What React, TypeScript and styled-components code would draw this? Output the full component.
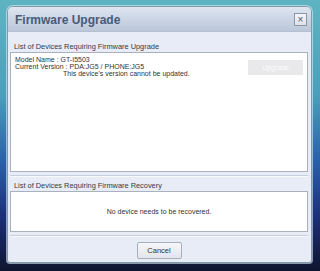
import React from "react";
import styled, { createGlobalStyle } from "styled-components";

const Global = createGlobalStyle`
  html, body { margin: 0; padding: 0; }
  body {
    width: 320px;
    height: 271px;
    overflow: hidden;
    font-family: "Liberation Sans", Arial, sans-serif;
    background: linear-gradient(180deg, #5fb4c2 0%, #4a9fbc 35%, #2a5fa8 60%, #1c2f78 80%, #0e1530 100%);
  }
`;

const Frame = styled.div`
  width: 320px;
  height: 271px;
  box-sizing: border-box;
  padding: 6px 8px 8px 7px;
  display: flex;
`;

const Dialog = styled.div`
  flex: 1;
  display: flex;
  flex-direction: column;
  border: 1px solid #7f9aa8;
  border-radius: 6px 6px 3px 3px;
  overflow: hidden;
  background: #e7ecf6;
  box-shadow: 0 0 0 1px rgba(220, 240, 245, 0.6);
`;

const TitleBar = styled.div`
  height: 23px;
  display: flex;
  align-items: center;
  justify-content: space-between;
  padding: 1px 4px 0 7px;
  background: linear-gradient(180deg, #dfe6f1 0%, #c9d3e3 55%, #bcc8da 100%);
  border-bottom: 1px solid #b5c0d2;
`;

const Title = styled.div`
  font-size: 12px;
  font-weight: bold;
  color: #485a78;
`;

const CloseButton = styled.div`
  width: 11px;
  height: 11px;
  border: 1px solid #8d96a6;
  background: linear-gradient(180deg, #f4f6fa, #dde2ea);
  display: flex;
  align-items: center;
  justify-content: center;
  color: #556;
  font-size: 10px;
  line-height: 1;
`;

const Body = styled.div`
  flex: 1;
  display: flex;
  flex-direction: column;
  padding: 9px 3px 0 2px;
`;

const SectionLabel = styled.div`
  font-size: 7.4px;
  color: #333a48;
  padding-left: 4px;
  height: 11px;
  line-height: 11px;
`;

const ListBox = styled.div<{ $h: number }>`
  height: ${(p) => p.$h}px;
  box-sizing: border-box;
  border: 1px solid #a9b1be;
  background: #ffffff;
`;

const DeviceRow = styled.div`
  display: flex;
  justify-content: space-between;
  padding: 3px 4px 0 4px;
`;

const Info = styled.div`
  font-size: 7px;
  line-height: 7px;
  color: #333;
`;

const Indented = styled.div`
  padding-left: 48px;
`;

const UpgradeButton = styled.div`
  width: 55px;
  height: 15px;
  margin-top: 4px;
  background: #e9e9ec;
  color: #fbfbfb;
  font-size: 7px;
  display: flex;
  align-items: center;
  justify-content: center;
`;

const Divider = styled.div`
  height: 1px;
  background: #c8d0dc;
  border-bottom: 1px solid #f7f9fc;
  margin: 3px 0 3px 0;
`;

const Empty = styled.div`
  height: 100%;
  display: flex;
  align-items: center;
  justify-content: center;
  font-size: 7px;
  color: #333;
`;

const Footer = styled.div`
  flex: 1;
  display: flex;
  align-items: center;
  justify-content: center;
  padding-bottom: 1px;
`;

const CancelButton = styled.div`
  width: 45px;
  height: 17px;
  box-sizing: border-box;
  border: 1px solid #a7afbd;
  border-radius: 2px;
  background: linear-gradient(180deg, #f6f7fa 0%, #e1e5ec 100%);
  font-size: 7.5px;
  color: #333;
  display: flex;
  align-items: center;
  justify-content: center;
`;

export default function App() {
  return (
    <>
      <Global />
      <Frame>
        <Dialog>
          <TitleBar>
            <Title>Firmware Upgrade</Title>
            <CloseButton>×</CloseButton>
          </TitleBar>
          <Body>
            <SectionLabel>List of Devices Requiring Firmware Upgrade</SectionLabel>
            <ListBox $h={120}>
              <DeviceRow>
                <Info>
                  <div>Model Name : GT-I5503</div>
                  <div>Current Version : PDA:JG5 / PHONE:JG5</div>
                  <Indented>This device's version cannot be updated.</Indented>
                </Info>
                <UpgradeButton>Upgrade</UpgradeButton>
              </DeviceRow>
            </ListBox>
            <Divider />
            <SectionLabel>List of Devices Requiring Firmware Recovery</SectionLabel>
            <ListBox $h={41}>
              <Empty>No device needs to be recovered.</Empty>
            </ListBox>
            <Divider />
            <Footer>
              <CancelButton>Cancel</CancelButton>
            </Footer>
          </Body>
        </Dialog>
      </Frame>
    </>
  );
}
